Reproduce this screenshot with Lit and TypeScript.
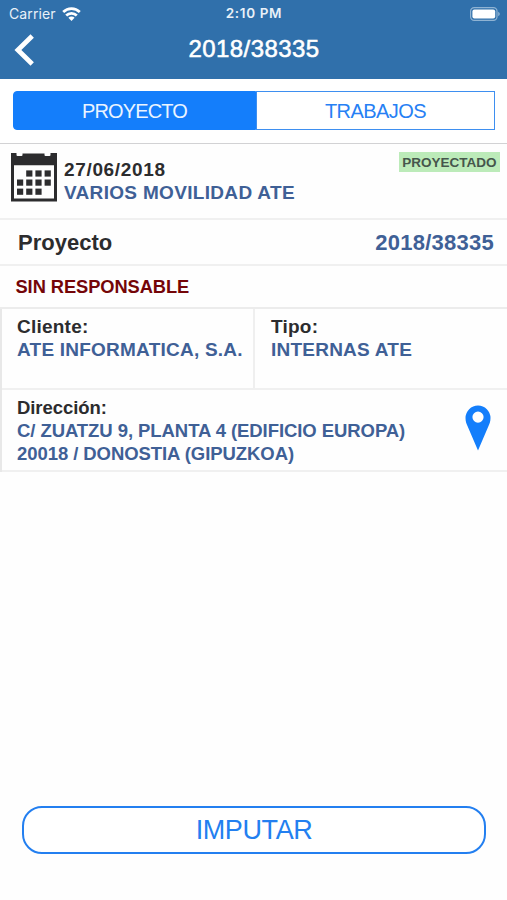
import { LitElement, html, css, svg } from "lit";
import { customElement } from "lit/decorators.js";

const DAYS = [
  [16.2, 18.4], [25.4, 18.4], [34.6, 18.4],
  [7, 27.5], [16.2, 27.5], [25.4, 27.5], [34.6, 27.5],
  [7, 36.6], [16.2, 36.6], [25.4, 36.6],
];

@customElement("app-root")
export class AppRoot extends LitElement {
  static styles = css`
    :host { display: flex; flex-direction: column; box-sizing: border-box; height: 900px; background: #fefefe;
      font-family: "Liberation Sans", Arial, sans-serif; color: #2c2c2e; white-space: nowrap; }
    * { box-sizing: border-box; }
    svg { display: block; }
    header { height: 79px; background: #3070ab; color: #fff; }
    .status { display: grid; grid-template-columns: 1fr auto 1fr; align-items: center; height: 27px; padding: 0 7px 0 9px;
      font-family: Inter, sans-serif; font-size: 14px; line-height: 27px; color: #e9f1f8; }
    .carrier { display: flex; align-items: center; gap: 6px; letter-spacing: .1px; }
    .time { font-weight: 600; font-size: 13.5px; letter-spacing: .65px; padding-right: 1px; }
    .battery { justify-self: end; }
    .nav { display: grid; grid-template-columns: 60px 1fr 60px; height: 46px; align-items: center; }
    .back { padding-left: 14px; }
    h1 { margin: 0; text-align: center; font-size: 24px; line-height: 44px; height: 46px; font-weight: 400; letter-spacing: .42px;
      -webkit-text-stroke: .55px #fff; padding-left: 1px; }
    .tabs { display: flex; height: 65px; padding: 12px 12px 13px 13px; border-bottom: 1.5px solid #d2d2d4; background: #fff; }
    .tab { height: 39px; border: 1.5px solid #3e8ff0; line-height: 38px; font-size: 20px; text-align: center; color: #2680f4; flex: 0 0 239px; letter-spacing: -.55px; }
    .tab.on { flex: 0 0 243px; background: #147efb; border-color: #147efb; color: #eaf4ff; border-radius: 4px 0 0 4px; letter-spacing: -.85px; }
    b { font-weight: 700; }
    .link { color: #3f6096; }
    .summary { display: flex; height: 76px; padding: 8px 7px 0 10px; border-bottom: 2px solid #f0f0f0; }
    .lines { display: flex; flex-direction: column; margin-left: 7px; padding-top: 6px; line-height: 23px; font-size: 19px; flex: 1; }
    .date { letter-spacing: .66px; }
    .name { letter-spacing: .32px; }
    .badge { height: 20px; width: 101px; text-align: center; background: #bcebb9; color: #46564c; font-size: 13.5px; font-weight: 700;
      line-height: 21px; letter-spacing: 0; }
    .project { display: flex; justify-content: space-between; height: 46px; line-height: 46px; padding: 0 13px 0 18px;
      border-bottom: 2px solid #f0f0f0; font-size: 22px; }
    .number { letter-spacing: .25px; }
    .owner { height: 43px; line-height: 42px; padding-left: 15.5px; border-bottom: 2px solid #ececec; color: #740508; font-size: 18.3px; letter-spacing: -.07px; }
    .details { border-left: 2px solid #e8e8e8; }
    .pair { display: flex; height: 81px; border-bottom: 2px solid #f0f0f0; }
    .cell { display: flex; flex-direction: column; padding: 6px 0 0 16px; font-size: 19px; line-height: 23px; letter-spacing: .23px; }
    .cell:first-child { width: 253px; border-right: 2px solid #efefef; padding-left: 15px; }
    .address { display: flex; justify-content: space-between; height: 82px; padding: 6px 16px 0 15px; border-bottom: 2px solid #f0f0f0; }
    .address .lines { margin: 0; padding: 0; font-size: 18.5px; letter-spacing: -.07px; }
    .pin { margin-top: 9px; }
    .footer { margin-top: auto; padding: 0 22px 46px; }
    button { display: block; width: 464px; height: 48px; padding: 0; background: #fff; border: 2px solid #237ff0; border-radius: 20px;
      color: #237ff0; font: 27px/44px "Liberation Sans", Arial, sans-serif; text-align: center; letter-spacing: -.4px; }
  `;

  private calendar() {
    return svg`<svg width="47" height="50" viewBox="0 0 47 50">
      <path fill="#2c2c2e" fill-rule="evenodd" d="M1 1h5.5v2q0 1 1 1h4q1 0 1-1V1.6h22v1.400q0 1 1 1h4q1 0 1-1V1H47v48.500H1ZM4 13.200v33.300h40V13.200Z"/>
      ${DAYS.map(([x, y]) => svg`<rect x=${x} y=${y} width="6.2" height="6.2" fill="#2c2c2e"/>`)}
    </svg>`;
  }

  render() {
    return html`
      <header>
        <div class="status">
          <div class="carrier">Carrier
            <svg width="19" height="14" viewBox="0 0 19 14" fill="none" stroke="#fff" stroke-width="2.7">
              <path d="M1.2 5a11.8 11.8 0 0 1 16.600 0M4.2 8.500a7.5 7.5 0 0 1 10.600 0"/>
              <path d="M9.5 14 6.400 10.800a4.400 4.400 0 0 1 6.200 0Z" fill="#fff" stroke="none"/>
            </svg>
          </div>
          <div class="time">2:10 PM</div>
          <svg class="battery" width="30" height="14" viewBox="0 0 30 14">
            <rect x=".6" y=".6" width="26.4" height="12.8" rx="3.6" fill="none" stroke="#8fb3d3" stroke-width="1.2"/>
            <rect x="2.4" y="2.4" width="22.8" height="9.2" rx="2" fill="#fff"/>
            <path d="M28.2 4.8q1.6.7 1.6 2.2t-1.6 2.2Z" fill="#8fb3d3"/>
          </svg>
        </div>
        <div class="nav">
          <div class="back">
            <svg width="22" height="32" viewBox="0 0 22 32"><path d="M18.2 2 3.900 16l14.300 14" fill="none" stroke="#fff" stroke-width="4.8"/></svg>
          </div>
          <h1>2018/38335</h1>
        </div>
      </header>
      <nav class="tabs"><div class="tab on">PROYECTO</div><div class="tab">TRABAJOS</div></nav>
      <section class="summary">
        ${this.calendar()}
        <div class="lines"><b class="date">27/06/2018</b><b class="name link">VARIOS MOVILIDAD ATE</b></div>
        <span class="badge">PROYECTADO</span>
      </section>
      <section class="project"><b>Proyecto</b><b class="number link">2018/38335</b></section>
      <section class="owner"><b>SIN RESPONSABLE</b></section>
      <section class="details">
        <div class="pair">
          <div class="cell"><b>Cliente:</b><b class="link">ATE INFORMATICA, S.A.</b></div>
          <div class="cell"><b>Tipo:</b><b class="link">INTERNAS ATE</b></div>
        </div>
        <div class="address">
          <div class="lines"><b>Dirección:</b><b class="link">C/ ZUATZU 9, PLANTA 4 (EDIFICIO EUROPA)</b><b class="link">20018 / DONOSTIA (GIPUZKOA)</b></div>
          <svg class="pin" width="26" height="46" viewBox="0 0 26 46">
            <path fill="#147efb" fill-rule="evenodd" d="M13 .500A12.500 12.500 0 0 0 .500 13C.500 16.500 1.500 19 2.700 21.500L13 45.500 23.300 21.500C24.500 19 25.500 16.500 25.500 13A12.500 12.500 0 0 0 13 .500ZM13 6.500a5.600 5.600 0 1 1 0 11.200A5.600 5.600 0 0 1 13 6.500Z"/>
          </svg>
        </div>
      </section>
      <div class="footer"><button>IMPUTAR</button></div>
    `;
  }
}
